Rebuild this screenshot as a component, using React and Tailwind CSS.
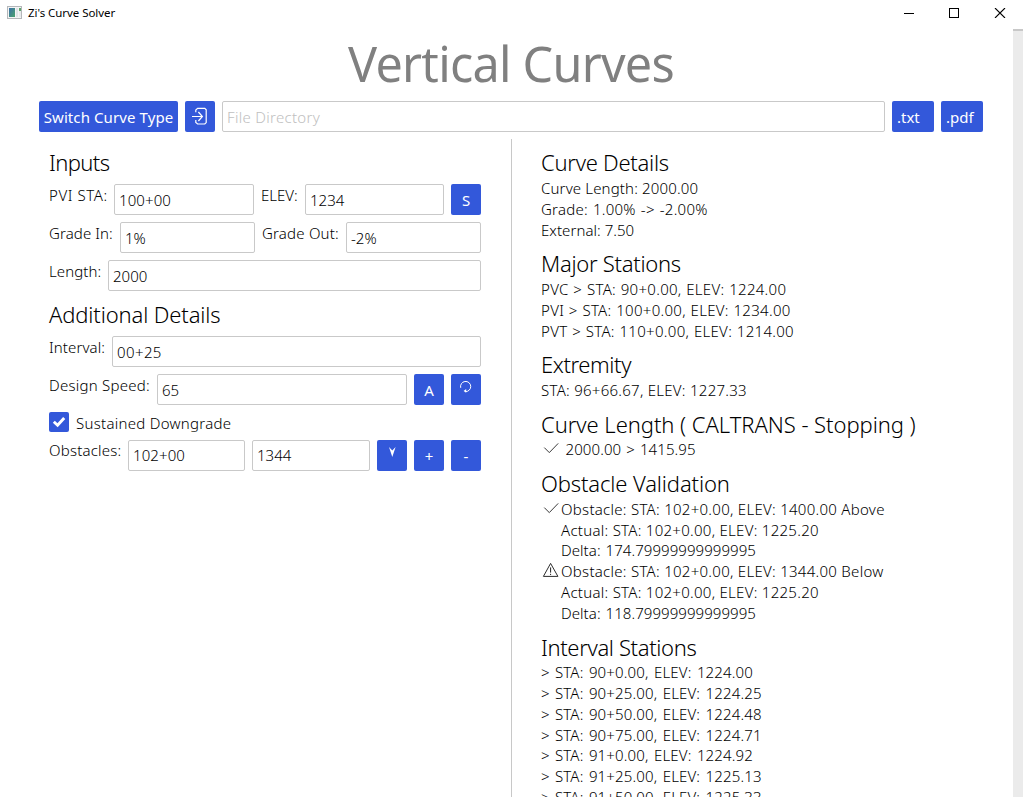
const blue = "bg-[#3358da] text-white rounded-[2px]";

function TitleBar() {
  return (
    <header className="flex h-[29px] items-start justify-between pl-[7px] pr-[17.5px]">
      <div className="flex items-center pt-[5px]">
        <svg width="16" height="16" viewBox="0 0 16 16" className="mr-[5px]">
          <defs>
            <linearGradient id="pane" x1="0" y1="0" x2="1" y2="1">
              <stop offset="0" stopColor="#3b6fa8" />
              <stop offset="1" stopColor="#4aa36c" />
            </linearGradient>
          </defs>
          <rect x="0.5" y="1.5" width="14" height="12" fill="#f4f4f4" stroke="#b4b7ba" />
          <rect x="2" y="3" width="6" height="9" fill="url(#pane)" />
          <rect x="9" y="3" width="2" height="9" fill="#dfe3e6" />
          <rect x="12" y="3" width="2" height="3" fill="#5fa56d" />
          <rect x="12" y="6" width="2" height="6" fill="#e8eaec" />
        </svg>
        <span className="whitespace-nowrap text-[11.5px] leading-4 tracking-[-0.05px]">Zi's Curve Solver</span>
      </div>
      <div className="flex gap-[35px] pt-[8px]">
        <svg width="10" height="10" viewBox="0 0 10 10" shapeRendering="crispEdges">
          <path d="M0 5.5h10" stroke="#000" />
        </svg>
        <svg width="10" height="10" viewBox="0 0 10 10" shapeRendering="crispEdges">
          <rect x="0.5" y="0.5" width="9" height="9" fill="none" stroke="#000" />
        </svg>
        <svg width="11.5" height="10" viewBox="0 0 11.5 10">
          <path d="M1 0l10 10M11 0l-10 10" stroke="#000" strokeWidth="1.1" />
        </svg>
      </div>
    </header>
  );
}

function SquareButton({ children }) {
  return (
    <button className={`${blue} flex h-[31px] w-[30px] shrink-0 justify-center text-[15px] font-normal leading-[32px]`}>
      {children}
    </button>
  );
}

function Label({ children, className }) {
  return (
    <label className={`h-[20px] shrink-0 overflow-hidden whitespace-nowrap ${className}`}>
      {children}
    </label>
  );
}

function Field({ className = "pt-[5px] pb-[4px]", ...props }) {
  return (
    <input
      className={`h-[31px] min-w-0 rounded-[2px] border border-[#c9c9c9] bg-white pl-[4px] leading-[20px] outline-none placeholder:text-[#c0c0c0] ${className}`}
      {...props}
    />
  );
}

function Section({ title, titleClass = "mb-[1px]", children }) {
  return (
    <section className="mb-[7.6px] whitespace-nowrap leading-[20.8px]">
      <h2 className={`text-[22px] leading-[30px] ${titleClass}`}>{title}</h2>
      {children}
    </section>
  );
}

function Check() {
  return (
    <svg width="20" height="20" viewBox="0 0 20 20" className="shrink-0">
      <path d="M3.3 8.6l5 5L17.2 4.4" fill="none" stroke="#222" strokeWidth="0.9" />
    </svg>
  );
}

function Warning() {
  return (
    <svg width="20" height="20" viewBox="0 0 20 20" className="shrink-0">
      <path d="M9.6 2.4L16.9 15.4H2.4z" fill="none" stroke="#222" strokeWidth="0.95" strokeLinejoin="round" />
      <path d="M9.6 6.4v5.2M9.6 12.8v1.2" stroke="#222" strokeWidth="1" />
    </svg>
  );
}

function Obstacle({ icon, lines }) {
  return (
    <div className="flex">
      {icon}
      <div className="tracking-[0.28px]">
        <p>{lines[0]}</p>
        <p>{lines[1]}</p>
        <p className="tracking-[0.06px] [word-spacing:1px]">{lines[2]}</p>
      </div>
    </div>
  );
}

const intervals = [
  "90+0.00, ELEV: 1224.00",
  "90+25.00, ELEV: 1224.25",
  "90+50.00, ELEV: 1224.48",
  "90+75.00, ELEV: 1224.71",
  "91+0.00, ELEV: 1224.92",
  "91+25.00, ELEV: 1225.13",
  "91+50.00, ELEV: 1225.33",
];

export default function App() {
  return (
    <div className="flex h-[797px] w-[1023px] flex-col overflow-hidden bg-white font-['Noto_Sans','Open_Sans',sans-serif] text-black">
      <TitleBar />
      <div className="flex min-h-0 flex-1">
        <main className="flex min-w-0 flex-1 flex-col pl-[39px] pr-[30px] text-[15px] font-light">
          <h1 className="h-[72px] pt-[1px] text-center text-[48.5px] font-normal leading-[67px] tracking-[-0.75px] text-[#808080]">
            Vertical Curves
          </h1>
          <div className="flex shrink-0 gap-[7px]">
            <button className={`${blue} h-[31px] w-[139px] whitespace-nowrap text-[15px] font-normal leading-[33px] tracking-[0.1px]`}>
              Switch Curve Type
            </button>
            <button className={`${blue} flex h-[31px] w-[30px] items-center justify-center`}>
              <svg width="30" height="31" viewBox="0 0 30 31" fill="none" stroke="#fff" strokeWidth="1.2">
                <path d="M10.8 11.2V9l1.8-1.6h7.2l1.4 1.4v12.8l-1.4 1.4h-7.2l-1.8-1.6v-2.4" />
                <path d="M7 15.5h10.2M13.4 11l4 4.5-4 4.5" />
              </svg>
            </button>
            <Field className="flex-1 pt-[5px] pb-[4px] tracking-[0.3px]" placeholder="File Directory" />
            <button className={`${blue} h-[31px] w-[42px] pl-[5px] text-left text-[15px] font-normal leading-[33px]`}>.txt</button>
            <button className={`${blue} h-[31px] w-[42px] pl-[5px] text-left text-[15px] font-normal leading-[33px]`}>.pdf</button>
          </div>

          <div className="mt-[7px] flex min-h-0 flex-1">
            <div className="flex w-[472px] shrink-0 flex-col gap-[7px] pl-[10px] pr-[30px] pt-[8px]">
              <h2 className="text-[22px] leading-[30px] tracking-[-0.6px]">Inputs</h2>
              <div className="flex">
                <Label className="w-[65px] leading-[22px] tracking-[0.6px]">PVI STA:</Label>
                <Field className="w-[140px] pt-[5px] pb-[4px] tracking-[0.1px]" defaultValue="100+00" />
                <Label className="ml-[7px] w-[44px] leading-[22px]">ELEV:</Label>
                <Field className="mr-[7px] flex-1 pt-[5px] pb-[4px]" defaultValue="1234" />
                <SquareButton>S</SquareButton>
              </div>
              <div className="flex">
                <Label className="w-[71px] leading-[22px] tracking-[0.1px]">Grade In:</Label>
                <Field className="w-[135px] pt-[5px] pb-[4px]" defaultValue="1%" />
                <Label className="ml-[7px] w-[84px] leading-[22px] tracking-[0.2px]">Grade Out:</Label>
                <Field className="flex-1 pt-[5px] pb-[4px]" defaultValue="-2%" />
              </div>
              <div className="flex">
                <Label className="w-[59px] leading-[22px] tracking-[0.1px]">Length:</Label>
                <Field className="flex-1 pt-[5px] pb-[4px]" defaultValue="2000" />
              </div>
              <h2 className="mt-[1px] text-[22px] leading-[30px] tracking-[-0.13px]">Additional Details</h2>
              <div className="flex">
                <Label className="w-[63px] leading-[22px] tracking-[0.1px]">Interval:</Label>
                <Field className="flex-1 pt-[5px] pb-[4px] tracking-[0.4px]" defaultValue="00+25" />
              </div>
              <div className="flex gap-[7px]">
                <Label className="w-[101px] leading-[22px] tracking-[0.25px]">Design Speed:</Label>
                <Field className="flex-1 pt-[5px] pb-[4px]" defaultValue="65" />
                <SquareButton>A</SquareButton>
                <SquareButton>
                  <svg width="30" height="31" viewBox="0 0 30 31">
                    <path d="M9.7 13.8A5.1 5.1 0 1 1 14.2 17.6" fill="none" stroke="#fff" strokeWidth="1" />
                    <path d="M12.6 17l2.6-2v3.8z" fill="#fff" />
                  </svg>
                </SquareButton>
              </div>
              <div className="flex gap-[7px]">
                <span className={`${blue} flex h-[20px] w-[20px] items-center justify-center`}>
                  <svg width="20" height="20" viewBox="0 0 20 20">
                    <path d="M4.8 9.8l3.8 3.5 6.6-7.2" fill="none" stroke="#fff" strokeWidth="2.9" />
                  </svg>
                </span>
                <Label className="leading-[22px] tracking-[0.28px]">Sustained Downgrade</Label>
              </div>
              <div className="mt-[1px] flex gap-[7px]">
                <Label className="w-[72px] leading-[20px] tracking-[0.2px]">Obstacles:</Label>
                <Field className="w-[117px] pt-[4px] pb-[5px] tracking-[0.1px]" defaultValue="102+00" />
                <Field className="flex-1 pt-[4px] pb-[5px]" defaultValue="1344" />
                <SquareButton>
                  <svg width="30" height="31" viewBox="0 0 30 31">
                    <path d="M12 7l3.3 10L18.6 7l-3.3 3.4z" fill="#fff" />
                  </svg>
                </SquareButton>
                <SquareButton>+</SquareButton>
                <SquareButton>-</SquareButton>
              </div>
            </div>
            <div className="w-px bg-[#c8c8c8]" />
            <div className="min-w-0 flex-1 pl-[29px] pt-[8px]">
              <Section title="Curve Details" titleClass="mb-[1px] tracking-[-0.27px]">
                <p className="tracking-[0.15px]">Curve Length: 2000.00</p>
                <p className="tracking-[0.25px] [word-spacing:0.9px]">Grade: 1.00% -&gt; -2.00%</p>
                <p className="tracking-[0.05px]">External: 7.50</p>
              </Section>
              <Section title="Major Stations" titleClass="mb-[1px] tracking-[-0.28px]">
                <div className="tracking-[0.3px] [word-spacing:0.5px]">
                  <p>PVC &gt; STA: 90+0.00, ELEV: 1224.00</p>
                  <p>PVI &gt; STA: 100+0.00, ELEV: 1234.00</p>
                  <p>PVT &gt; STA: 110+0.00, ELEV: 1214.00</p>
                </div>
              </Section>
              <Section title="Extremity" titleClass="mb-[1px] tracking-[-0.4px]">
                <p className="tracking-[0.27px]">STA: 96+66.67, ELEV: 1227.33</p>
              </Section>
              <Section title="Curve Length ( CALTRANS - Stopping )" titleClass="pt-[1px] tracking-[-0.05px]">
                <div className="flex h-[20.8px] gap-[4.5px]">
                  <Check />
                  <p className="tracking-[0.1px] [word-spacing:1px]">2000.00 &gt; 1415.95</p>
                </div>
              </Section>
              <Section title="Obstacle Validation" titleClass="mb-[1px] tracking-[-0.13px]">
                <Obstacle
                  icon={<Check />}
                  lines={[
                    "Obstacle: STA: 102+0.00, ELEV: 1400.00 Above",
                    "Actual: STA: 102+0.00, ELEV: 1225.20",
                    "Delta: 174.79999999999995",
                  ]}
                />
                <Obstacle
                  icon={<Warning />}
                  lines={[
                    "Obstacle: STA: 102+0.00, ELEV: 1344.00 Below",
                    "Actual: STA: 102+0.00, ELEV: 1225.20",
                    "Delta: 118.79999999999995",
                  ]}
                />
              </Section>
              <Section title="Interval Stations" titleClass="pt-[1px] tracking-[-0.36px]">
                {intervals.map((t) => (
                  <p key={t} className="tracking-[0.15px]">
                    <span className="mr-[1.2px]">&gt;</span> <span className="[word-spacing:1.4px]">STA: {t}</span>
                  </p>
                ))}
              </Section>
            </div>
          </div>
        </main>
        <div className="w-[10px] border-t-2 border-[#c8c8c8] bg-[#ebebeb]" />
      </div>
    </div>
  );
}
